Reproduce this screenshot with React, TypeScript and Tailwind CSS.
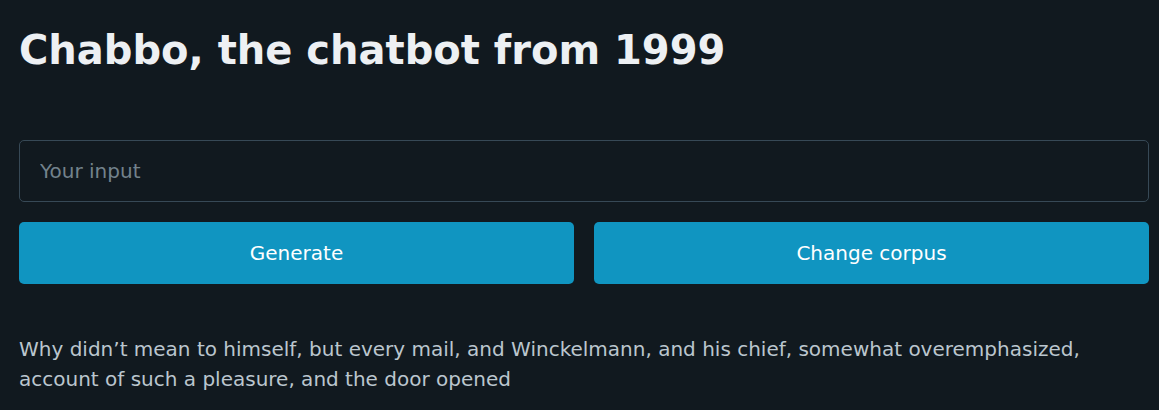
import { useState } from 'react';

const font = { fontFamily: '"DejaVu Sans", sans-serif' };

export default function App() {
  const [input, setInput] = useState('');

  return (
    <main
      className="min-h-screen w-full bg-[#11191f] pt-[28px] font-['DejaVu_Sans',sans-serif]"
      style={font}
    >
      <div className="ml-[19px] w-[1130px]">
        <h1 className="text-[40px] font-bold leading-[45px] text-[#edf0f3]">
          Chabbo, the chatbot from 1999
        </h1>

        <input
          type="text"
          value={input}
          onChange={(e) => setInput(e.target.value)}
          placeholder="Your input"
          className="mt-[67px] block h-[62px] w-full rounded-[5px] border border-[#374956] bg-transparent px-[20px] text-[20px] text-[#edf0f3] outline-none placeholder:text-[#73828c]"
        />

        <div className="mt-[20px] grid grid-cols-2 gap-[20px]">
          <button
            type="button"
            className="h-[62px] rounded-[5px] bg-[#1095c1] text-[20px] text-white"
          >
            Generate
          </button>
          <button
            type="button"
            className="h-[62px] rounded-[5px] bg-[#1095c1] text-[20px] text-white"
          >
            Change corpus
          </button>
        </div>

        <p className="mt-[50px] text-[20px] leading-[30px] text-[#bbc6ce]">
          Why didn’t mean to himself, but every mail, and Winckelmann, and his chief, somewhat
          overemphasized, account of such a pleasure, and the door opened
        </p>
      </div>
    </main>
  );
}
